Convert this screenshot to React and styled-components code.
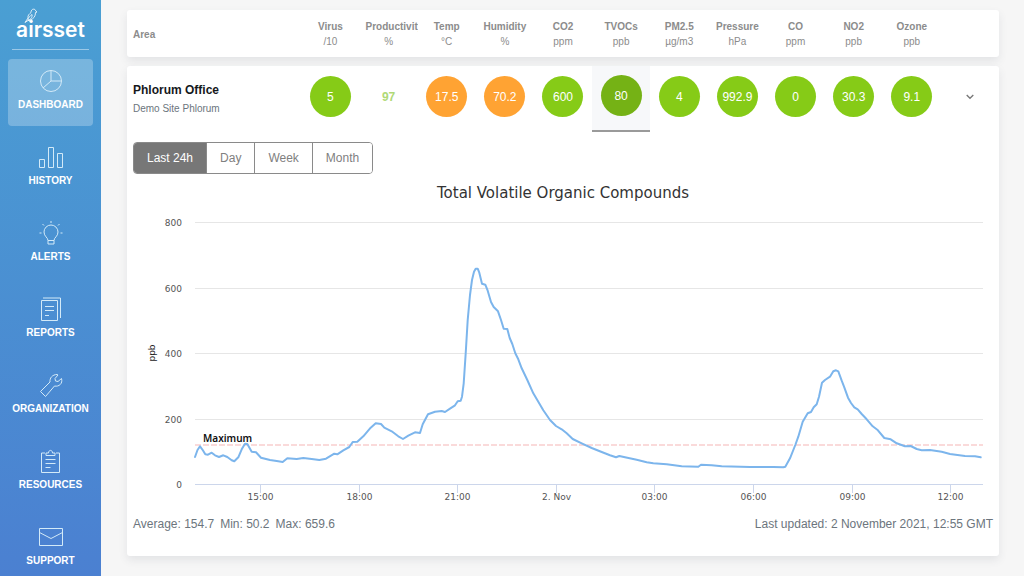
import React from 'react'
import styled, {createGlobalStyle, css} from 'styled-components'

const GlobalStyle = createGlobalStyle`
  * {
    box-sizing: border-box;
  }

  body {
    margin: 0;
    background: #f6f6f6;
    font-family: "Liberation Sans", Arial, sans-serif;
    font-size: 12px;
    color: #6c757d;
  }

  button {
    font-family: inherit;
  }
`

const Page = styled.div`
  display: flex;
  align-items: flex-start;
  min-height: 100vh;
`

const Sidebar = styled.aside`
  position: sticky;
  top: 0;
  flex: 0 0 101px;
  height: 100vh;
  padding: 8px 8px 0;
  overflow: hidden;
  background: linear-gradient(#4a9fd3, #4b80d1);
`

const Brand = styled.a`
  display: flex;
  flex-direction: column;
  align-items: center;
  height: 42px;
  margin: 0 4px 9px;
  border-bottom: 1px solid rgba(255, 255, 255, 0.45);
  color: #fff;
  text-decoration: none;
`

const BirdIcon = styled.svg`
  width: 14px;
  height: 16px;
  margin-left: 12px;
  align-self: flex-start;
`

const BrandName = styled.span`
  margin-top: -6px;
  font-family: Inter, sans-serif;
  font-size: 21px;
  font-weight: 600;
  line-height: 24px;
`

const Nav = styled.nav`
  display: flex;
  flex-direction: column;
  gap: 9px;
`

const NavItem = styled.a`
  display: flex;
  flex: none;
  flex-direction: column;
  align-items: center;
  gap: 5px;
  height: 67px;
  padding-top: 10px;
  border-radius: 4px;
  background: ${props => props.$active ? 'rgba(255, 255, 255, 0.26)' : 'transparent'};
  color: #fff;
  font-size: 10px;
  font-weight: bold;
  line-height: 13px;
  text-decoration: none;
  text-transform: uppercase;

  svg {
    width: 24px;
    height: 24px;
    fill: none;
    stroke: #d3eaf8;
    stroke-width: 1;
  }
`

const Main = styled.main`
  flex: 1;
  min-width: 0;
  padding: 10px 25px 20px 26px;
`

const AreaTable = styled.table`
  display: flex;
  flex-direction: column;
  gap: 9px;
`

const cardStyle = css`
  display: block;
  border-radius: 3px;
  background: #fff;
  box-shadow: 0 4px 8px rgba(60, 70, 90, 0.1);
`

const TableHeader = styled.thead`
  ${cardStyle}
`

const TableBody = styled.tbody`
  ${cardStyle}
`

const TableRow = styled.tr`
  display: grid;
  grid-template-columns: 3fr repeat(12, minmax(0, 1fr));
  align-items: center;
  height: ${props => props.$head ? '47px' : '66px'};
`

const AreaHeading = styled.th`
  padding: 1px 6px 0;
  color: #8c8c8c;
  font-size: 10px;
  text-align: left;
`

const MetricHeading = styled.th`
  padding: 1px 6px 0;
  overflow: hidden;
  color: #8c8c8c;
  font-size: 10px;
  line-height: 15px;
  text-align: center;
  white-space: nowrap;
`

const Unit = styled.span`
  display: block;
  font-weight: normal;
`

const AreaCell = styled.th`
  padding: 0 6px;
  font-weight: normal;
  text-align: left;
`

const AreaName = styled.div`
  color: #15181c;
  font-size: 12px;
  font-weight: bold;
  line-height: 18px;
`

const SiteName = styled.div`
  font-size: 10px;
  line-height: 19px;
`

const MetricCell = styled.td`
  display: flex;
  align-items: center;
  justify-content: center;
  align-self: stretch;
  padding: 0 0 5px;
  border-bottom: ${props => props.$selected ? '2px solid #9a9a9a' : 'none'};
  background: ${props => props.$selected ? '#f7f8fa' : 'transparent'};
`

const levels = {
  good: '#86cb17',
  selected: '#75b215',
  warn: '#ffa333'
}

const Reading = styled.button`
  width: 41px;
  height: 41px;
  padding: 0;
  border: 0;
  border-radius: 50%;
  background: ${props => levels[props.$level] || 'transparent'};
  color: ${props => props.$level === 'plain' ? '#b0d977' : '#fff'};
  font-size: 12px;
  font-weight: ${props => props.$level === 'plain' ? 'bold' : 'normal'};
  cursor: pointer;
`

const ToggleButton = styled.button`
  display: flex;
  padding: 4px;
  border: 0;
  background: none;

  svg {
    width: 8px;
    height: 6px;
    fill: none;
    stroke: #777;
    stroke-width: 1.3;
  }
`

const DetailRow = styled.tr`
  display: block;
`

const DetailCell = styled.td`
  display: block;
  padding: 10px 6px 23px;
`

const RangeGroup = styled.div`
  display: inline-flex;
  border: 1px solid #8a8a8a;
  border-radius: 4px;
  overflow: hidden;
`

const RangeButton = styled.button`
  height: 30px;
  padding: 0 13px;
  border: 0;
  background: ${props => props.$active ? '#777' : '#fff'};
  color: ${props => props.$active ? '#fff' : '#808080'};
  font-size: 12px;
  cursor: pointer;

  & + & {
    border-left: 1px solid #8a8a8a;
  }
`

const ChartTitle = styled.h2`
  margin: 8px 0 2px;
  color: #333;
  font-family: "DejaVu Sans", sans-serif;
  font-size: 15px;
  font-weight: normal;
  line-height: 22px;
  text-align: center;
`

const ChartSvg = styled.svg`
  display: block;
  width: 100%;
  font-family: "DejaVu Sans", sans-serif;
  font-size: 9px;

  .grid {
    stroke: #e6e6e6;
  }

  .axis {
    stroke: #ccd6eb;
  }

  .label {
    fill: #555;
  }

  .limit {
    stroke: #f5b5b5;
    stroke-dasharray: 6 2;
  }

  .unit {
    fill: #222;
  }

  .limit-label {
    fill: #111;
    font-family: "Noto Sans", sans-serif;
    font-size: 10px;
    font-weight: 600;
  }

  .series {
    fill: none;
    stroke: #7cb5ec;
    stroke-width: 2;
    stroke-linejoin: round;
    stroke-linecap: round;
  }
`

const Summary = styled.div`
  display: flex;
  justify-content: space-between;
  padding-top: 7px;
  line-height: 18px;
`

const Stats = styled.div`
  display: flex;
  gap: 6px;
`

const navItems = [
  {
    label: 'Dashboard',
    icon: <><circle cx="12" cy="12" r="10.5" /><path d="M12 1.5V12h10.5M12 12l-8 7" /></>
  },
  {
    label: 'History',
    icon: <path d="M.5 22.5v-8h5v8zM9.500 22.500v-20h5v20zM18.500 22.500v-14h5v14z" />
  },
  {
    label: 'Alerts',
    icon: <path d="M9 19.500c0-3-4-4-4-8.500a7 7 0 0 1 14 0c0 4.500-4 5.500-4 8.500zM9 19.500v3.500h6v-3.500M12 2V0M5 4.500 3.500 3M19 4.500 20.500 3M2.500 12h-2M23.500 12h-2" />
  },
  {
    label: 'Reports',
    icon: <path d="M2.500 3.500h16v20h-16zM4 1h17.500v20M6 9.500h9M6 13.500h9M6 18.500h4" />
  },
  {
    label: 'Organization',
    icon: <path d="m1.500 18.500 9.500-9.500c-.5-4 2.500-7.500 7-7.500l1 .5-3 3.500.5 2.500 2.500.5 3.500-3c1.500 5-2.500 8.500-7 7.500l-9 10.500z" />
  },
  {
    label: 'Resources',
    icon: <path d="M6 4H2.500v19.500h18V4H17M7 6.500V4h2.500c0-3.500 4-3.500 4 0H16v2.500zM6.500 10.500h10M6.500 14.500h10M6.500 18.500h5" />
  },
  {
    label: 'Support',
    icon: <path d="M.5 3.500h23v17H.5zM.5 7.500 12 13.500 23.500 7.500" />
  }
]

const metrics = [
  {name: 'Virus', unit: '/10', value: '5', level: 'good'},
  {name: 'Productivity', unit: '%', value: '97', level: 'plain'},
  {name: 'Temp', unit: '°C', value: '17.5', level: 'warn'},
  {name: 'Humidity', unit: '%', value: '70.2', level: 'warn'},
  {name: 'CO2', unit: 'ppm', value: '600', level: 'good'},
  {name: 'TVOCs', unit: 'ppb', value: '80', level: 'selected'},
  {name: 'PM2.5', unit: 'µg/m3', value: '4', level: 'good'},
  {name: 'Pressure', unit: 'hPa', value: '992.9', level: 'good'},
  {name: 'CO', unit: 'ppm', value: '0', level: 'good'},
  {name: 'NO2', unit: 'ppb', value: '30.3', level: 'good'},
  {name: 'Ozone', unit: 'ppb', value: '9.1', level: 'good'}
]

const ranges = ['Last 24h', 'Day', 'Week', 'Month']

const hours = ['15:00', '18:00', '21:00', '2. Nov', '03:00', '06:00', '09:00', '12:00']

// distance along the time axis, height above the zero line
const trace = [
  [0, 27], [2.5, 34], [5, 37.7], [7.7, 34], [10.3, 29.7], [13, 29.3], [16.7, 31.3], [20, 28.7], [24, 27],
  [28.3, 28.7], [32.3, 27], [36.7, 23.7], [39.3, 22.7], [43.3, 26.7], [46.7, 34.7], [50, 40.3], [52.3, 40],
  [56.7, 32.3], [61, 31.7], [66, 26.3], [75, 24], [81.7, 23], [87.7, 22], [92.3, 25.7], [101.7, 25],
  [108.3, 26], [116.7, 25], [124.3, 24], [131, 25.3], [139.3, 30.3], [142.3, 29.7], [148.3, 33.7],
  [154.3, 37], [157.7, 42], [162.3, 42.3], [168.3, 47.7], [175.7, 56.3], [180.7, 60.7], [186, 60],
  [189.3, 56.3], [196.7, 52.7], [203.3, 47.7], [208, 45], [213.3, 48.3], [220, 51.7], [225, 51],
  [227.7, 59.7], [233, 69.7], [240, 72.3], [246.7, 73], [250, 72], [255, 75.3], [260, 78.7], [262.7, 82.7],
  [265.7, 83.3], [267, 87.3], [268.7, 100.7], [270.7, 130.7], [272.7, 164], [275, 189], [277, 204],
  [279, 212.3], [280.7, 215.3], [282.7, 215.3], [284.3, 211.3], [287, 200.3], [290.3, 199.3],
  [292.7, 193.3], [296, 182], [298.7, 177], [303, 172.7], [306, 164], [308.7, 155.3], [312.3, 155],
  [314.7, 146], [317.3, 140], [320.3, 130.7], [323.3, 124.7], [326.7, 115.7], [332.3, 104], [338.3, 90.7],
  [343.3, 82.3], [348.3, 73.7], [355, 64], [361, 58], [366.7, 54.7], [371.7, 50.7], [377.7, 45],
  [386.7, 40.7], [396.7, 36], [406.7, 32], [415, 28.7], [421, 26.7], [424.3, 28], [430, 26.7],
  [441.7, 24.3], [451.7, 21.7], [458.3, 20.7], [471.7, 19.7], [486.7, 17.7], [503.3, 17.3], [506, 19.3],
  [516.7, 18.7], [526.7, 17.7], [555, 17], [578.3, 17], [588.3, 16.7], [590.3, 17.3], [595, 25.7],
  [600.3, 39], [603.3, 47.3], [607.7, 62.3], [612.7, 70.7], [616, 72], [618.7, 76.7], [621.7, 79.7],
  [624, 87.3], [627, 101.3], [630, 104], [635, 107.3], [638.3, 112.7], [641, 113.7], [643.3, 112.7],
  [646.7, 103.3], [649.3, 96.7], [653, 86.3], [656, 81], [659.3, 76.7], [662.7, 74.7], [666.7, 70],
  [671.7, 64.7], [677.7, 57.7], [682.3, 54.3], [689.3, 46], [695.7, 44.7], [701.7, 40.7], [710, 37.7],
  [715.7, 38], [721.7, 35], [726.7, 33.7], [735, 34], [746.7, 32.3], [755, 30], [770, 28], [780, 27.7],
  [785.7, 26.7]
]

const plot = {left: 62, right: 850, bottom: 279, step: 65.4}

const Chart = () => {
  const points = trace.map(([x, h]) => `${plot.left + x},${plot.bottom - 1 - h}`).join(' ')

  return (
    <ChartSvg viewBox="0 0 860 302" role="img" aria-label="Total Volatile Organic Compounds">
      {[0, 200, 400, 600, 800].map((value, i) => {
        const y = Math.round(plot.bottom - i * plot.step) - 0.5
        return <g key={value}>
          <line className={i ? 'grid' : 'axis'} x1={plot.left} x2={plot.right} y1={y} y2={y} />
          <text className="label" x="49" y={y + 3} textAnchor="end">{value}</text>
        </g>
      })}

      {hours.map((hour, i) => {
        const x = Math.round(127 + i * 98.6) + 0.5
        return <g key={hour}>
          <line className="axis" x1={x} x2={x} y1={plot.bottom} y2={plot.bottom + 8} />
          <text className="label" x={x} y={plot.bottom + 15} textAnchor="middle">{hour}</text>
        </g>
      })}

      <text className="unit" x="22" y="147" textAnchor="middle" transform="rotate(-90 22 147)">ppb</text>
      <line className="limit" x1={plot.left} x2={plot.right} y1="239" y2="239" />
      <polyline className="series" points={points} />
      <text className="limit-label" x="70" y="236">Maximum</text>
    </ChartSvg>
  )
}

const App = () => {
  const [range, setRange] = React.useState('Last 24h')
  const [open, setOpen] = React.useState(true)

  return (
    <>
      <GlobalStyle />
      <Page>
        <Sidebar>
          <Brand href="#">
            <BirdIcon viewBox="0 0 14 16" fill="none" stroke="#fff" strokeWidth="0.8" aria-hidden="true">
              <path d="M1 14.500 4 10c-.5-3 1.500-4 3-5.500C7 2.500 8 1.200 9.500 1.200S11.500 2 11.700 3l1.300 1-1.500.5c0 4-2 6.500-5.500 7.500l-2 .5zM4 12.500C4 9.500 6 8 8 6.500c.5 2-.5 4.500-4 6M7.500 11.500l.8 2M5.500 12.200l.7 1.800" />
            </BirdIcon>
            <BrandName>airsset</BrandName>
          </Brand>
          <Nav>
            {navItems.map((item, i) => {
              return <NavItem key={item.label} href="#" $active={i === 0}>
                <svg viewBox="0 0 24 24" aria-hidden="true">{item.icon}</svg>
                {item.label}
              </NavItem>
            })}
          </Nav>
        </Sidebar>

        <Main>
          <AreaTable>
            <TableHeader>
              <TableRow $head>
                <AreaHeading>Area</AreaHeading>
                {metrics.map(metric => {
                  return <MetricHeading key={metric.name}>{metric.name}<Unit>{metric.unit}</Unit></MetricHeading>
                })}
              </TableRow>
            </TableHeader>

            <TableBody>
              <TableRow>
                <AreaCell scope="row">
                  <AreaName>Phlorum Office</AreaName>
                  <SiteName>Demo Site Phlorum</SiteName>
                </AreaCell>
                {metrics.map(metric => {
                  return <MetricCell key={metric.name} $selected={metric.level === 'selected'}>
                    <Reading $level={metric.level}>{metric.value}</Reading>
                  </MetricCell>
                })}
                <MetricCell>
                  <ToggleButton aria-label="Toggle details" aria-expanded={open} onClick={() => setOpen(!open)}>
                    <svg viewBox="0 0 8 6"><path d="m.7 1 3.300 3.300L7.300 1" /></svg>
                  </ToggleButton>
                </MetricCell>
              </TableRow>

              {open && <DetailRow>
                <DetailCell>
                  <RangeGroup>
                    {ranges.map(name => {
                      return <RangeButton key={name} $active={name === range} onClick={() => setRange(name)}>{name}</RangeButton>
                    })}
                  </RangeGroup>
                  <ChartTitle>Total Volatile Organic Compounds</ChartTitle>
                  <Chart />
                  <Summary>
                    <Stats>
                      <span>Average: 154.7</span>
                      <span>Min: 50.2</span>
                      <span>Max: 659.6</span>
                    </Stats>
                    <span>Last updated: 2 November 2021, 12:55 GMT</span>
                  </Summary>
                </DetailCell>
              </DetailRow>}
            </TableBody>
          </AreaTable>
        </Main>
      </Page>
    </>
  )
}

export default App
